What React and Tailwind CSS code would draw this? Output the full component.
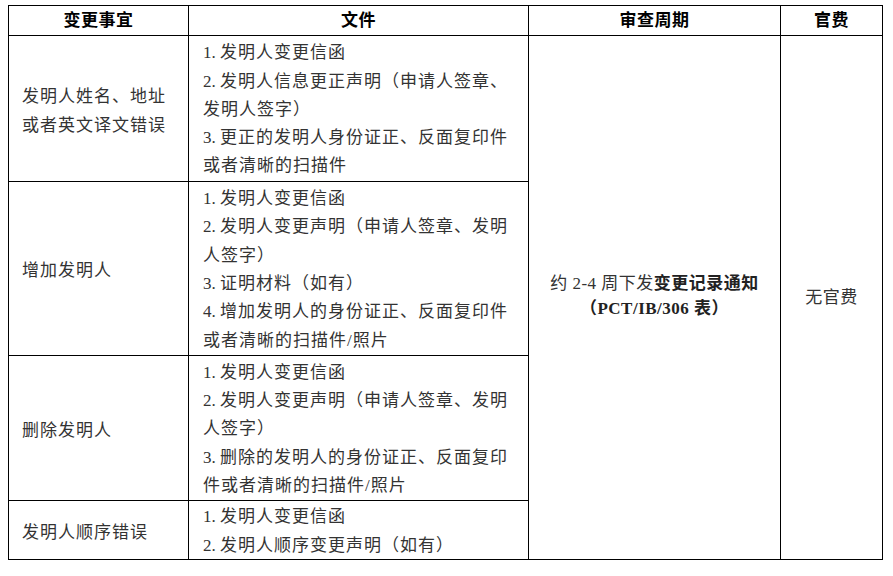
import React from 'react';

const FONT = { fontFamily: '"Liberation Serif", "Noto Sans CJK SC", serif' };

const rows = [
  {
    label: ['发明人姓名、地址', '或者英文译文错误'],
    rowClass: 'row-start-2',
    lines: [
      ['1.', '发明人变更信函'],
      ['2.', '发明人信息更正声明（申请人签章、'],
      [null, '发明人签字）'],
      ['3.', '更正的发明人身份证正、反面复印件'],
      [null, '或者清晰的扫描件'],
    ],
  },
  {
    label: ['增加发明人'],
    rowClass: 'row-start-3',
    lines: [
      ['1.', '发明人变更信函'],
      ['2.', '发明人变更声明（申请人签章、发明'],
      [null, '人签字）'],
      ['3.', '证明材料（如有）'],
      ['4.', '增加发明人的身份证正、反面复印件'],
      [null, '或者清晰的扫描件/照片'],
    ],
  },
  {
    label: ['删除发明人'],
    rowClass: 'row-start-4',
    lines: [
      ['1.', '发明人变更信函'],
      ['2.', '发明人变更声明（申请人签章、发明'],
      [null, '人签字）'],
      ['3.', '删除的发明人的身份证正、反面复印'],
      [null, '件或者清晰的扫描件/照片'],
    ],
  },
  {
    label: ['发明人顺序错误'],
    rowClass: 'row-start-5',
    lines: [
      ['1.', '发明人变更信函'],
      ['2.', '发明人顺序变更声明（如有）'],
    ],
  },
];

export default function App() {
  return (
    <div className="w-[893px] h-[576px] bg-white pl-[8px] pt-[5px]" style={FONT}>
      <div className="grid w-fit grid-cols-[180px_340px_252px_102px] grid-rows-[30px_146px_174px_145px_59px] border-l border-t border-black text-[17px] text-[#333333]">
        <div className="col-start-1 row-start-1 flex items-center justify-center border-r border-b border-black pt-[1px] font-bold text-black tracking-[0.5px]">变更事宜</div>
        <div className="col-start-2 row-start-1 flex items-center justify-center border-r border-b border-black pt-[1px] font-bold text-black tracking-[0.5px]">文件</div>
        <div className="col-start-3 row-start-1 flex items-center justify-center border-r border-b border-black pt-[1px] font-bold text-black tracking-[0.5px]">审查周期</div>
        <div className="col-start-4 row-start-1 flex items-center justify-center border-r border-b border-black pt-[1px] font-bold text-black tracking-[0.5px]">官费</div>

        {rows.map((r, i) => (
          <React.Fragment key={i}>
            <div className={`col-start-1 ${r.rowClass} flex flex-col justify-center border-r border-b border-black pl-[13px] pt-[6px] leading-[28.5px] tracking-[1px]`}>
              {r.label.map((l, j) => (
                <div key={j} className="whitespace-nowrap">{l}</div>
              ))}
            </div>
            <div className={`col-start-2 ${r.rowClass} flex flex-col justify-center border-r border-b border-black pl-[14px] pt-[3px] leading-[28.3px] tracking-[1px]`}>
              {r.lines.map(([n, t], j) => (
                <div key={j} className="whitespace-nowrap">
                  {n && <span className="inline-block w-[17px] tracking-normal">{n}</span>}
                  {t}
                </div>
              ))}
            </div>
          </React.Fragment>
        ))}

        <div className="col-start-3 row-start-2 row-span-4 flex flex-col items-center justify-center border-r border-b border-black pb-[4px] leading-[25px] tracking-[0.5px]">
          <div className="whitespace-nowrap">约 2-4 周下发<span className="font-bold text-[#222222]">变更记录通知</span></div>
          <div className="whitespace-nowrap font-bold text-[#222222]">（PCT/IB/306 表）</div>
        </div>
        <div className="col-start-4 row-start-2 row-span-4 flex items-center justify-center border-r border-b border-black tracking-[0.5px]">
          无官费
        </div>
      </div>
    </div>
  );
}
